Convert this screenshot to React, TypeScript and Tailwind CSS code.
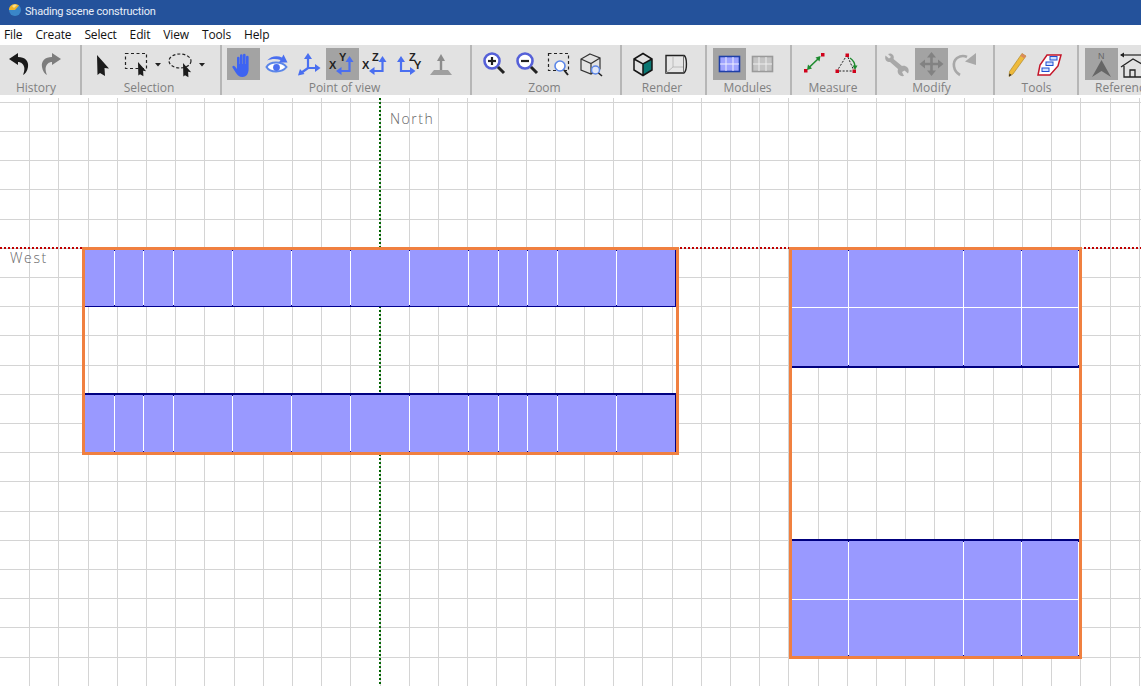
import type { ReactNode } from "react";

const menus = ["File", "Create", "Select", "Edit", "View", "Tools", "Help"];
const BLUE = "#4a6ff0";

const leftCells = [30, 29, 30, 59, 59, 59, 59, 59, 30, 29, 30, 59, 58];
const rightCells = [57, 115, 58, 57];

function Glyph({ children, wide }: { children: ReactNode; wide?: boolean }) {
  return (
    <svg viewBox={wide ? "0 0 44 32" : "0 0 33 32"} className={`h-[32px] shrink-0 ${wide ? "w-[44px]" : "w-[33px]"}`}>
      {children}
    </svg>
  );
}

function Btn({ on, children }: { on?: boolean; children: ReactNode }) {
  return <div className={`h-[32px] w-[33px] shrink-0 ${on ? "bg-[#a3a3a3]" : ""}`}>{children}</div>;
}

function Cursor({ x, y, s = 1 }: { x: number; y: number; s?: number }) {
  return (
    <path
      transform={`translate(${x} ${y}) scale(${s})`}
      d="M0 0 L12 13.5 L7.5 13 L8 21 L3 18 L0.5 20 Z"
      fill="#1c1c1c"
    />
  );
}

function Arrow({ d, color = BLUE }: { d: string; color?: string }) {
  return <path d={d} fill={color} />;
}

function AxisLabel({ x, y, children }: { x: number; y: number; children: string }) {
  return (
    <text x={x} y={y} fontSize="11" fontWeight="700" fill="#222" fontFamily="'Liberation Sans', sans-serif">
      {children}
    </text>
  );
}

function Magnifier({ minus }: { minus?: boolean }) {
  return (
    <Glyph>
      <circle cx="15" cy="13" r="7.5" fill="#fff" stroke="#5560d8" strokeWidth="2.6" />
      <path d="M11 13 H19" stroke="#222" strokeWidth="2.2" />
      {!minus && <path d="M15 9 V17" stroke="#222" strokeWidth="2.2" />}
      <path d="M21 19 L27 25" stroke="#222" strokeWidth="3" />
    </Glyph>
  );
}

function ModuleGrid({ color, fill, line }: { color: string; fill: string; line: string }) {
  return (
    <Glyph>
      <rect x="6.5" y="8.5" width="20" height="15" fill={fill} stroke={color} strokeWidth="1.6" />
      <path d="M13 9 V23 M20 9 V23 M7 16 H26" stroke={line} strokeWidth="1" />
    </Glyph>
  );
}

function Group({
  label,
  width,
  pad,
  labelPad,
  children,
}: {
  label: string;
  width: string;
  pad: string;
  labelPad: string;
  children: ReactNode;
}) {
  return (
    <div className={`flex h-full shrink-0 flex-col border-r-2 border-[#b6b6b6] pt-[3px] ${width} ${pad}`}>
      <div className="flex h-[32px]">{children}</div>
      <div className={`mt-px whitespace-nowrap text-center text-[12px] leading-[14px] text-[#808080] ${labelPad}`}>{label}</div>
    </div>
  );
}

// white module joints with the small dark ticks at their ends
function Cells({ widths }: { widths: number[] }) {
  return (
    <>
      {widths.map((w, i) => (
        <div
          key={i}
          className="relative h-full shrink-0 border-r border-white before:absolute before:right-[-1px] before:top-0 before:h-px before:w-px before:bg-[#000080] after:absolute after:bottom-0 after:right-[-1px] after:h-px after:w-px after:bg-[#000080] last:border-r-0 last:before:hidden last:after:hidden"
          style={{ width: w }}
        />
      ))}
    </>
  );
}

function Scene() {
  const vertical = Array.from({ length: 39 }, (_, i) => Math.round(29.2 * (i + 1)) + 0.5);
  const horizontal = Array.from({ length: 20 }, (_, i) => Math.round(6.8 + 29.2 * i) + 0.5);
  return (
    <div className="relative min-h-0 flex-1 overflow-hidden bg-white">
      <svg className="absolute inset-0 h-full w-full" viewBox="0 0 1141 591">
        {vertical.map((x) => (
          <path key={x} d={`M${x} 3 V591`} stroke="#d4d4d4" strokeWidth="1" />
        ))}
        {horizontal.map((y) => (
          <path key={y} d={`M0 ${y} H1141`} stroke="#d4d4d4" strokeWidth="1" />
        ))}
        <path d="M0 153 H1141" stroke="#c00000" strokeWidth="2" strokeDasharray="2 2" />
        <path d="M380 3 V591" stroke="#006400" strokeWidth="2" strokeDasharray="2 2" />
      </svg>

      <span className="absolute left-[390px] top-[15px] text-[14px] font-light leading-[18px] tracking-[1.5px] text-[#666]">
        North
      </span>
      <span className="absolute left-[10px] top-[154px] text-[14px] font-light leading-[18px] tracking-[1.6px] text-[#666]">
        West
      </span>

      {/* left field */}
      <div className="absolute left-[82px] top-[152px] flex h-[208px] w-[597px] flex-col justify-between border-[3px] border-[#f08040]">
        <div className="flex h-[57px] border-b border-r border-[#000090] bg-[#9999ff]">
          <Cells widths={leftCells} />
        </div>
        <div className="flex h-[59px] border-r border-t-2 border-[#000080] bg-[#9999ff]">
          <Cells widths={leftCells} />
        </div>
      </div>

      {/* right field */}
      <div className="absolute left-[789px] top-[152px] flex h-[412px] w-[293px] flex-col justify-between border-[3px] border-[#f08040]">
        <div className="relative flex h-[118px] border-b-2 border-[#000080] bg-[#9999ff]">
          <Cells widths={rightCells} />
          <div className="absolute inset-x-0 top-[57px] h-px bg-white" />
        </div>
        <div className="relative flex h-[117px] border-t-2 border-[#000080] bg-[#9999ff]">
          <Cells widths={rightCells} />
          <div className="absolute inset-x-0 top-[58px] h-px bg-white" />
        </div>
      </div>
    </div>
  );
}

export default function App() {
  return (
    <div className="flex h-[686px] w-[1141px] flex-col overflow-hidden bg-white font-['Open_Sans','Liberation_Sans',sans-serif]">
      {/* title bar */}
      <div className="flex h-[25px] shrink-0 items-center bg-[#24529b] pl-[8px]">
        <svg viewBox="0 0 14 14" className="h-[14px] w-[14px] -translate-y-[3px]">
          <circle cx="7" cy="7" r="6" fill="#3a86c8" />
          <path d="M1 7 A6 6 0 0 1 11 2.5 L7 7 Z" fill="#f0b429" />
          <path d="M4 3 A4 4 0 0 1 9 2 L6 5 Z" fill="#fbe08a" />
        </svg>
        <span className="ml-[3px] font-['Roboto',sans-serif] text-[11px] tracking-[-0.2px] text-[#e8eef8]">Shading scene construction</span>
      </div>

      {/* menu bar */}
      <div className="flex h-[20px] shrink-0 items-center gap-[13px] pl-[4px] text-[12px] tracking-[-0.15px] text-[#111]">
        {menus.map((m) => (
          <span key={m}>{m}</span>
        ))}
      </div>

      {/* toolbar */}
      <div className="flex h-[50px] shrink-0 overflow-hidden bg-[#e2e2e2]">
        <Group label="History" width="w-[82px]" pad="pl-[2px] pr-[10px]" labelPad="">
          <Btn>
            <Glyph>
              <path d="M7 11 L16 5 V9 C23 9 27 13 26 19 C25.5 23 23 26 21 27 C23 22 23 18 20 15.5 C19 14.5 17.5 14 16 14 V17 Z" fill="#1a1a1a" />
            </Glyph>
          </Btn>
          <Btn>
            <Glyph>
              <path d="M26 11 L17 5 V9 C10 9 6 13 7 19 C7.5 23 10 26 12 27 C10 22 10 18 13 15.5 C14 14.5 15.5 14 17 14 V17 Z" fill="#7d7d7d" />
            </Glyph>
          </Btn>
        </Group>

        <Group label="Selection" width="w-[140px]" pad="pl-[4px]" labelPad="pr-[8px]">
          <Btn>
            <Glyph>
              <Cursor x={11} y={7} />
            </Glyph>
          </Btn>
          <Glyph wide>
            <rect x="6.5" y="5.5" width="21" height="15" fill="none" stroke="#222" strokeWidth="1.2" strokeDasharray="3 2.5" />
            <Cursor x={19} y={14} s={0.68} />
            <path d="M36 15 H42 L39 18.5 Z" fill="#222" />
          </Glyph>
          <Glyph wide>
            <ellipse cx="17" cy="13" rx="11" ry="7" fill="none" stroke="#222" strokeWidth="1.2" strokeDasharray="3 2" />
            <Cursor x={20} y={15} s={0.68} />
            <path d="M36 15 H42 L39 18.5 Z" fill="#222" />
          </Glyph>
        </Group>

        <Group label="Point of view" width="w-[250px]" pad="pl-[5px]" labelPad="pr-[8px]">
          <Btn on>
            <Glyph>
              <path
                d="M10 21 V10 A1.3 1.3 0 0 1 12.6 10 V16 H13 V7.5 A1.3 1.3 0 0 1 15.6 7.5 V16 H16 V7 A1.3 1.3 0 0 1 18.6 7 V16 H19 V9 A1.3 1.3 0 0 1 21.6 9 V21 C21.6 26 19 29 15.5 29 C12 29 10.5 27 9 25 L5.5 19.5 C5 18 6.5 17 8 18.5 Z"
                fill="#3d63f2"
              />
            </Glyph>
          </Btn>
          <Btn>
            <Glyph>
              <path d="M6.5 19 C10 13 22 13 26.5 19 C22 25 10 25 6.5 19 Z" fill="#fff" stroke="#5b86e8" strokeWidth="2" />
              <circle cx="16.5" cy="19.5" r="3.4" fill="#4a6ff0" />
              <path d="M7 12.5 C11 8 17 7 22 9.5 L23.5 6.5 L27.5 14.5 L19 14.5 L20.5 12 C16 10.5 11 11 7 12.5 Z" fill="#4a6ff0" />
            </Glyph>
          </Btn>
          <Btn>
            <Glyph>
              <path d="M15 20 V10 M15 20 H24 M15 20 L8 25" stroke={BLUE} strokeWidth="2.2" fill="none" />
              <Arrow d="M15 5 L19 11 H11 Z" />
              <Arrow d="M27.5 20 L22 16 V24 Z" />
              <Arrow d="M5 27.5 L7 21 L11.5 26 Z" />
            </Glyph>
          </Btn>
          <Btn on>
            <Glyph>
              <AxisLabel x={13} y={13}>Y</AxisLabel>
              <AxisLabel x={3} y={21}>X</AxisLabel>
              <path d="M23.5 13 V23 H14" stroke={BLUE} strokeWidth="2.2" fill="none" />
              <Arrow d="M23.5 8 L27.5 14 H19.5 Z" />
              <Arrow d="M10 23 L15.5 19 V27 Z" />
            </Glyph>
          </Btn>
          <Btn>
            <Glyph>
              <AxisLabel x={13} y={13}>Z</AxisLabel>
              <AxisLabel x={3} y={21}>X</AxisLabel>
              <path d="M23.5 13 V23 H14" stroke={BLUE} strokeWidth="2.2" fill="none" />
              <Arrow d="M23.5 8 L27.5 14 H19.5 Z" />
              <Arrow d="M10 23 L15.5 19 V27 Z" />
            </Glyph>
          </Btn>
          <Btn>
            <Glyph>
              <AxisLabel x={17} y={13}>Z</AxisLabel>
              <AxisLabel x={22} y={21}>Y</AxisLabel>
              <path d="M9 13 V23 H19" stroke={BLUE} strokeWidth="2.2" fill="none" />
              <Arrow d="M9 8 L13 14 H5 Z" />
              <Arrow d="M23.5 23 L18 19 V27 Z" />
            </Glyph>
          </Btn>
          <Btn>
            <Glyph>
              <path d="M16 12 V22" stroke="#8c8c8c" strokeWidth="2.4" />
              <path d="M16 6 L20 13 H12 Z" fill="#8c8c8c" />
              <path d="M9 22 H23 L27 27 H5 Z" fill="#a0a0a0" />
            </Glyph>
          </Btn>
        </Group>

        <Group label="Zoom" width="w-[150px]" pad="pl-[5px]" labelPad="pr-[8px]">
          <Btn>
            <Magnifier />
          </Btn>
          <Btn>
            <Magnifier minus />
          </Btn>
          <Btn>
            <Glyph>
              <rect x="5.5" y="5.5" width="20" height="17" fill="none" stroke="#222" strokeWidth="1.2" strokeDasharray="3 2.5" />
              <circle cx="17" cy="18" r="5" fill="#fff" stroke="#5b86e8" strokeWidth="1.6" />
              <path d="M21 22 L25 27" stroke="#222" strokeWidth="2" />
            </Glyph>
          </Btn>
          <Btn>
            <Glyph>
              <path d="M14 6 L24 10 V21 L15 26 L5 22 V11 Z M5 11 L15 15.5 L24 10 M15 15.5 V26" fill="none" stroke="#333" strokeWidth="1.2" />
              <circle cx="19.5" cy="22" r="4" fill="#dfe6f7" stroke="#5b86e8" strokeWidth="1.5" />
              <path d="M22.5 25 L26 28" stroke="#222" strokeWidth="1.6" />
            </Glyph>
          </Btn>
        </Group>

        <Group label="Render" width="w-[85px]" pad="pl-[5px]" labelPad="pr-[8px]">
          <Btn>
            <Glyph>
              <path d="M16 16 L25 11.5 V22 L16 27.5 Z" fill="#0b7773" />
              <path d="M16 5.5 L25 11 V22 L16 27.5 L7 22 V11 Z M7 11 L16 16 L25 11 M16 16 V27.5" fill="none" stroke="#151515" strokeWidth="1.5" />
            </Glyph>
          </Btn>
          <Btn>
            <Glyph>
              <path d="M6 7.5 H24 C27 9 27.5 22 24 25 H6 Z" fill="#e6e6e6" stroke="#222" strokeWidth="1.4" />
              <path d="M6 25 L13 19 V8 M13 19 H24" stroke="#b0b0b0" strokeWidth="0.8" fill="none" />
              <path d="M23.5 7.5 V25" stroke="#555" strokeWidth="0.8" />
            </Glyph>
          </Btn>
        </Group>

        <Group label="Modules" width="w-[85px]" pad="pl-[6px]" labelPad="pr-[8px]">
          <Btn on>
            <ModuleGrid color="#1e3fa8" fill="#9fa4ff" line="#eeeeff" />
          </Btn>
          <Btn>
            <ModuleGrid color="#9a9a9a" fill="#c4c4c4" line="#eeeeee" />
          </Btn>
        </Group>

        <Group label="Measure" width="w-[85px]" pad="pl-[5px]" labelPad="pr-[6px]">
          <Btn>
            <Glyph>
              <rect x="7" y="21" width="3.5" height="3.5" fill="#d0021b" />
              <rect x="24" y="5" width="3.5" height="3.5" fill="#d0021b" />
              <path d="M11.5 20 L22 10" stroke="#1d8a2e" strokeWidth="1.6" />
              <path d="M10 22 L11 16.5 L15 20.5 Z M23.5 8 L22.5 13.5 L18.5 9.5 Z" fill="#1d8a2e" />
            </Glyph>
          </Btn>
          <Btn>
            <Glyph>
              <path d="M17 7 L7 23 H24 Z" fill="none" stroke="#222" strokeWidth="1" strokeDasharray="2 1.5" />
              <rect x="15.5" y="5.5" width="3.5" height="3.5" fill="#d0021b" />
              <rect x="5.5" y="21.5" width="3.5" height="3.5" fill="#d0021b" />
              <rect x="22.5" y="21.5" width="3.5" height="3.5" fill="#d0021b" />
              <path d="M20 10 C23 12 25 15 25 19" fill="none" stroke="#1d8a2e" strokeWidth="1.4" />
              <path d="M25 22 L22.5 17.5 H27.5 Z" fill="#1d8a2e" />
            </Glyph>
          </Btn>
        </Group>

        <Group label="Modify" width="w-[118px]" pad="pl-[5px]" labelPad="pr-[12px]">
          <Btn>
            <Glyph>
              <path
                d="M6 6 C8 5 10 5.5 11 7 C12 8.5 12 10 11.5 11 L20 18 C22 17.5 24 18 25.5 19.5 C27 21 27 23.5 26 25.5 L22.5 22.5 L20 24 L22 28 C19.5 28.5 17.5 27.5 16.5 26 C15.5 24.5 15.5 22.5 16 21 L8 14 C6.5 14 5 13.5 4 12.5 C3 11 3 9 3.5 7.5 L7 10.5 L9 9 Z"
                fill="#a8a8a8"
              />
            </Glyph>
          </Btn>
          <Btn on>
            <Glyph>
              <path d="M16.5 8 V24 M8.5 16 H24.5" stroke="#828282" strokeWidth="2.6" />
              <path d="M16.5 4 L21 9.5 H12 Z M16.5 28 L21 22.5 H12 Z M4.5 16 L10 11.5 V20.5 Z M28.5 16 L23 11.5 V20.5 Z" fill="#828282" />
            </Glyph>
          </Btn>
          <Btn>
            <Glyph>
              <path d="M12 27 C5 23 4 14 9 10 C12 8 16 7.5 19 9" fill="none" stroke="#a8a8a8" strokeWidth="2.6" />
              <path d="M28 5 V17 L17 13.5 Z" fill="#a8a8a8" />
            </Glyph>
          </Btn>
        </Group>

        <Group label="Tools" width="w-[84px]" pad="pl-[5px]" labelPad="pr-[4px]">
          <Btn>
            <Glyph>
              <path d="M22 5.5 L26 8 L13 26 L9 28.5 L9.5 23.5 Z" fill="#eeba3c" stroke="#a8801f" strokeWidth="0.6" />
              <path d="M22 5.5 L26 8 L24.5 10.5 L20.5 8 Z" fill="#d98a5e" />
              <path d="M9 28.5 L9.5 25.5 L11.5 27 Z" fill="#222" />
            </Glyph>
          </Btn>
          <Btn>
            <Glyph>
              <path d="M14 7 H28 L25 18 L17 27 H5 L7 17 Z" fill="#fff" stroke="#c4162a" strokeWidth="1.5" />
              <rect x="17" y="8.5" width="7" height="3.5" fill="#cfe0ff" stroke="#1f4fd0" strokeWidth="1" />
              <rect x="13" y="14" width="7" height="3.5" fill="#cfe0ff" stroke="#1f4fd0" strokeWidth="1" />
              <rect x="9" y="20" width="7" height="3.5" fill="#cfe0ff" stroke="#1f4fd0" strokeWidth="1" />
            </Glyph>
          </Btn>
        </Group>

        <Group label="Reference" width="w-[80px]" pad="pl-[6px]" labelPad="pl-[10px] !text-left">
          <Btn on>
            <Glyph>
              <text x="13" y="11" fontSize="9" fill="#666" fontFamily="'Liberation Sans', sans-serif">N</text>
              <path d="M16.5 12 L26 29 L16.5 23 L7 29 Z" fill="#666" />
            </Glyph>
          </Btn>
          <Btn>
            <Glyph>
              <path d="M3 7 H30" stroke="#222" strokeWidth="1.2" />
              <path d="M2 7 L6 4.5 V9.5 Z" fill="#222" />
              <path d="M3 19 L15 11 L29 19 M6 18 V29 H26 V18 M12 29 V22 H17 V29" fill="none" stroke="#222" strokeWidth="1.3" />
            </Glyph>
          </Btn>
        </Group>
      </div>

      <Scene />
    </div>
  );
}
